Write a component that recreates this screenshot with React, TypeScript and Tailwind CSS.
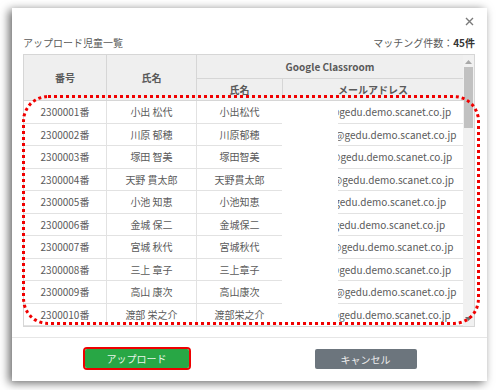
import React from 'react';

type Row = { no: string; name: string; gcName: string; email: string };

const rows: Row[] = [
  { no: '2300001番', name: '小出 松代', gcName: '小出松代', email: 'mkoide@gedu.demo.scanet.co.jp' },
  { no: '2300002番', name: '川原 郁穂', gcName: '川原郁穂', email: 'kawahara@gedu.demo.scanet.co.jp' },
  { no: '2300003番', name: '塚田 智美', gcName: '塚田智美', email: 'tsukada@gedu.demo.scanet.co.jp' },
  { no: '2300004番', name: '天野 貫太郎', gcName: '天野貫太郎', email: 'amano.k@gedu.demo.scanet.co.jp' },
  { no: '2300005番', name: '小池 知恵', gcName: '小池知恵', email: 'koike@gedu.demo.scanet.co.jp' },
  { no: '2300006番', name: '金城 保二', gcName: '金城保二', email: 'kinjo@gedu.demo.scanet.co.jp' },
  { no: '2300007番', name: '宮城 秋代', gcName: '宮城秋代', email: 'miyagi.a@gedu.demo.scanet.co.jp' },
  { no: '2300008番', name: '三上 章子', gcName: '三上章子', email: 'mikami@gedu.demo.scanet.co.jp' },
  { no: '2300009番', name: '高山 康次', gcName: '高山康次', email: 'takayama@gedu.demo.scanet.co.jp' },
  { no: '2300010番', name: '渡部 栄之介', gcName: '渡部栄之介', email: 'watabe@gedu.demo.scanet.co.jp' },
];

export default function App() {
  return (
    <div
      className="w-[496px] h-[390px] bg-white pt-[8px] pl-[12px] overflow-hidden"
      style={{ fontFamily: '"Noto Sans CJK JP", "Noto Sans", sans-serif' }}
    >
      <div className="relative w-[475px] h-[373px] bg-white shadow-[-3px_2px_9px_rgba(0,0,0,0.6)] flex flex-col">
        {/* Close */}
        <div className="h-[18px] flex justify-end items-end pr-[13px]">
          <svg width="9" height="9" viewBox="0 0 9 9" className="text-[#7a7a7a]">
            <path d="M1 1L8 8M8 1L1 8" stroke="currentColor" strokeWidth="1.4" />
          </svg>
        </div>

        <div className="pl-[11px] pr-[12px]">
          {/* Title row */}
          <div className="mt-[7px] mb-[3px] h-[18px] flex items-center justify-between text-[10px] text-[#5a5a5a]">
            <span>アップロード児童一覧</span>
            <span>
              マッチング件数：<span className="font-bold text-[#333]">45件</span>
            </span>
          </div>

          {/* Table */}
          <div className="h-[273px] border border-[#d6d6d6] flex text-[10px] text-[#5a5a5a]">
            <div className="flex-1 flex flex-col">
              {/* Header */}
              <div className="h-[46px] flex bg-[#efefef] border-b border-[#d6d6d6] font-bold">
                <div className="w-[83px] border-r border-[#d6d6d6] flex items-center justify-center">番号</div>
                <div className="w-[90px] border-r border-[#d6d6d6] flex items-center justify-center">氏名</div>
                <div className="flex-1 flex flex-col">
                  <div className="h-[24px] border-b border-[#d6d6d6] flex items-center justify-center">Google Classroom</div>
                  <div className="flex-1 flex">
                    <div className="w-[86px] border-r border-[#d6d6d6] flex items-center justify-center">氏名</div>
                    <div className="flex-1 flex items-center justify-center">メールアドレス</div>
                  </div>
                </div>
              </div>

              {/* Body */}
              <div className="relative flex-1 overflow-hidden">
                {rows.map((r) => (
                  <div key={r.no} className="h-[22.5px] flex border-b border-[#e2e2e2]">
                    <div className="w-[83px] border-r border-[#e2e2e2] flex items-center justify-center">{r.no}</div>
                    <div className="w-[90px] border-r border-[#e2e2e2] flex items-center justify-center">{r.name}</div>
                    <div className="w-[86px] border-r border-[#e2e2e2] flex items-center justify-center">{r.gcName}</div>
                    <div className="flex-1 flex items-center justify-center whitespace-nowrap">{r.email}</div>
                  </div>
                ))}
                {/* masked area */}
                <div className="absolute top-0 bottom-0 left-[258px] w-[56px] bg-white" />
              </div>
            </div>

            {/* Scrollbar */}
            <div className="w-[11px] bg-[#f1f1f1] flex flex-col items-center">
              <svg width="7" height="4" viewBox="0 0 7 4" className="mt-[5px]">
                <path d="M0 4L3.5 0L7 4Z" fill="#a8a8a8" />
              </svg>
              <div className="mt-[3px] w-[9px] h-[61px] bg-[#c1c1c1]" />
              <div className="flex-1" />
              <svg width="7" height="4" viewBox="0 0 7 4" className="mb-[5px]">
                <path d="M0 0L7 0L3.5 4Z" fill="#6e6e6e" />
              </svg>
            </div>
          </div>
        </div>

        {/* Footer */}
        <div className="mt-[10px] border-t border-[#e6e6e6] flex-1 flex items-start justify-center gap-[124px] pt-[9px]">
          <div className="w-[108px] h-[23px] border-2 border-[#ee0000] rounded-[4px] p-0">
            <button className="w-full h-full bg-[#28a745] rounded-[2px] text-[10px] text-[#e8f5ea] flex items-center justify-center">
              アップロード
            </button>
          </div>
          <button className="mt-[2px] w-[102px] h-[20px] bg-[#6c757d] rounded-[2px] text-[10px] text-[#eeeeee] flex items-center justify-center">
            キャンセル
          </button>
        </div>

        {/* Red dotted highlight */}
        <div className="absolute left-[10px] top-[87px] w-[458px] h-[230px] border-[3px] border-dotted border-[#f00000] rounded-[26px] pointer-events-none" />
      </div>
    </div>
  );
}
